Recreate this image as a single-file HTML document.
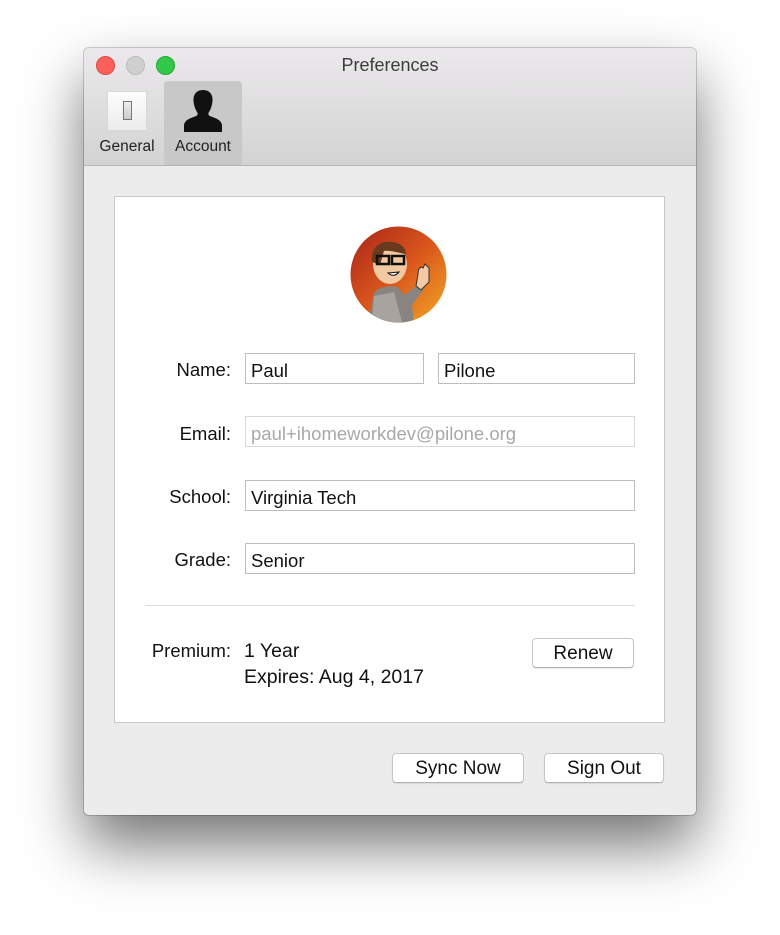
<!DOCTYPE html>
<html><head><style>
body{margin:0;width:780px;height:935px;background:#fff;position:relative;overflow:hidden;font-family:"Liberation Sans",Helvetica,sans-serif;}
.win{position:absolute;left:84px;top:48px;width:612px;height:767px;background:#ececec;border-radius:5px;box-shadow:0 0 0 1px rgba(0,0,0,0.18),0 30px 60px rgba(0,0,0,0.55);overflow:hidden;}
.tb{position:absolute;left:0;top:0;width:612px;height:117px;background:linear-gradient(#ebe9eb,#d4d3d4);border-bottom:1px solid #b5b5b5;}
.dot{position:absolute;top:8px;width:17px;height:17px;border-radius:50%;}
.title{position:absolute;top:7px;left:0;width:612px;text-align:center;font-size:18px;color:#3c3c3c;}
.tab{position:absolute;top:33px;height:84px;}
.sel{background:#c9c8c9;border-radius:4px 4px 0 0;}
.tl{position:absolute;bottom:9px;left:0;width:100%;text-align:center;font-size:15.5px;color:#222;}
.panel{position:absolute;left:30px;top:148px;width:549px;height:525px;background:#fff;border:1px solid #c8c8c8;}
.lab{position:absolute;font-size:18.5px;color:#111;text-align:right;width:120px;}
.f{position:absolute;height:31px;border:1px solid #bdbdbd;background:#fff;font-size:18.5px;line-height:34px;padding-left:5px;box-sizing:border-box;color:#111;}
.btn{position:absolute;height:30px;background:#fff;border:1px solid #c6c6c6;border-bottom-color:#b0b0b0;border-radius:4px;box-sizing:border-box;text-align:center;font-size:19px;line-height:29px;color:#111;box-shadow:0 1px 1px rgba(0,0,0,0.08);}
</style></head><body>
<div class="win">
 <div class="tb">
  <div class="dot" style="left:12px;background:#fc605c;border:0.5px solid #de4841"></div>
  <div class="dot" style="left:42px;background:#d0cfd0;border:0.5px solid #bcbcbc"></div>
  <div class="dot" style="left:72px;background:#34c84a;border:0.5px solid #22a833"></div>
  <div class="title">Preferences</div>
  <div class="tab" style="left:10px;width:66px">
   <div style="position:absolute;left:13px;top:10px;width:40px;height:40px;background:linear-gradient(#fdfdfd,#ececec);border:1px solid #d8d8d8;box-sizing:border-box"></div>
   <div style="position:absolute;left:29px;top:20px;width:9px;height:19px;border:1px solid #777;background:linear-gradient(#eee,#ccc);box-sizing:border-box"></div>
   <div class="tl">General</div>
  </div>
  <div class="tab sel" style="left:80px;width:78px">
   <svg style="position:absolute;left:17px;top:7px" width="44" height="44" viewBox="0 0 44 44"><path d="M22 2c-7 0-10 5-9.5 11 .3 4 1.5 8 3.5 11 1 1.5 1 3-1 4-4 2-11 3-12 9v7h38v-7c-1-6-8-7-12-9-2-1-2-2.5-1-4 2-3 3.2-7 3.5-11C32 7 29 2 22 2z" fill="#111"/></svg>
   <div class="tl">Account</div>
  </div>
 </div>
 <div class="panel">
  <svg style="position:absolute;left:235px;top:29px" width="97" height="97" viewBox="0 0 97 97">
   <defs><linearGradient id="g" x1="0" y1="0" x2="1" y2="1"><stop offset="0" stop-color="#a8241a"/><stop offset="0.5" stop-color="#d9561c"/><stop offset="1" stop-color="#f3a726"/></linearGradient><clipPath id="c"><circle cx="48.5" cy="48.5" r="48"/></clipPath></defs>
   <circle cx="48.5" cy="48.5" r="48" fill="url(#g)"/>
   <g clip-path="url(#c)">
    <path d="M18 97l6-30c4-6 16-8 24-6l6 8 14-10 6 4-12 16 2 18z" fill="#8a8480"/>
    <path d="M24 70l20-4 8 30H22z" fill="#a9a3a0"/>
    <ellipse cx="40" cy="38" rx="17" ry="20" fill="#f2c9a2"/>
    <path d="M22 36c-2-14 8-22 20-20 9 1 14 6 14 12-8-1-16-4-22-3l-4 14z" fill="#6a3a1e"/>
    <rect x="27" y="30" width="12" height="8" fill="none" stroke="#111" stroke-width="2.5"/>
    <rect x="42" y="30" width="12" height="8" fill="none" stroke="#111" stroke-width="2.5"/>
    <path d="M38 47q6 5 11-1z" fill="#fff" stroke="#111"/>
    <path d="M68 48c0-6 3-8 5-6l2-4 4 4v14l-8 8-5-4z" fill="#f2c9a2" stroke="#333" stroke-width="1"/>
   </g>
  </svg>
  <div class="lab" style="left:-4px;top:162px">Name:</div>
  <div class="f" style="left:130px;top:156px;width:179px">Paul</div>
  <div class="f" style="left:323px;top:156px;width:197px">Pilone</div>
  <div class="lab" style="left:-4px;top:226px">Email:</div>
  <div class="f" style="left:130px;top:219px;width:390px;color:#a8a8a8;border-color:#d6d6d6">paul+ihomeworkdev@pilone.org</div>
  <div class="lab" style="left:-4px;top:289px">School:</div>
  <div class="f" style="left:130px;top:283px;width:390px">Virginia Tech</div>
  <div class="lab" style="left:-4px;top:352px">Grade:</div>
  <div class="f" style="left:130px;top:346px;width:390px">Senior</div>
  <div style="position:absolute;left:30px;top:408px;width:490px;height:1px;background:#dedede"></div>
  <div class="lab" style="left:-4px;top:443px">Premium:</div>
  <div style="position:absolute;left:129px;top:441px;font-size:19.5px;color:#111;line-height:26px">1 Year<br>Expires: Aug 4, 2017</div>
  <div class="btn" style="left:417px;top:441px;width:102px">Renew</div>
 </div>
 <div class="btn" style="left:308px;top:705px;width:132px">Sync Now</div>
 <div class="btn" style="left:460px;top:705px;width:120px">Sign Out</div>
</div>
</body></html>
